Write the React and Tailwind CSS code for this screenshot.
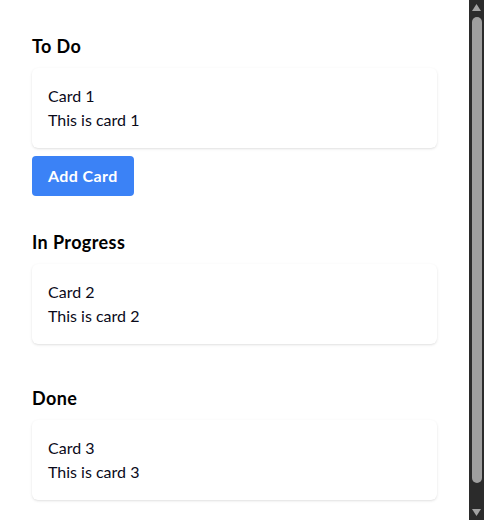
const columns = [
  { title: 'To Do', cards: [{ id: 1, title: 'Card 1', content: 'This is card 1' }], canAdd: true },
  { title: 'In Progress', cards: [{ id: 2, title: 'Card 2', content: 'This is card 2' }] },
  { title: 'Done', cards: [{ id: 3, title: 'Card 3', content: 'This is card 3' }] },
];

function Column({ title, cards, canAdd }) {
  return (
    <div>
      <h2 className="mb-2 text-lg font-bold leading-7 tracking-[0.4px] text-black">{title}</h2>
      {cards.map((card) => (
        <div key={card.id} className="mb-2 rounded-md bg-white p-4 shadow-[0_1px_3px_rgba(0,0,0,0.1),0_1px_2px_-1px_rgba(0,0,0,0.1)]">
          <p className="text-base leading-6 text-[#0a0a1a]">{card.title}</p>
          <p className="text-base leading-6 text-[#0a0a1a]">{card.content}</p>
        </div>
      ))}
      {canAdd && (
        <button className="rounded bg-[#3b82f6] px-4 py-2 text-base font-bold leading-6 tracking-[0.4px] text-white">
          Add Card
        </button>
      )}
    </div>
  );
}

// window scrollbar as drawn in the dark theme
function Scrollbar() {
  return (
    <div className="sticky top-0 flex h-screen w-[15px] shrink-0 flex-col bg-[#2b2b2b]">
      <svg width="15" height="15" viewBox="0 0 15 15" className="shrink-0">
        <polygon points="7.5,4 12,11 3,11" fill="#a3a3a3" />
      </svg>
      <div className="flex-1">
        <div className="ml-[3px] mt-[2px] h-[466px] w-[10px] rounded-full bg-[#9f9f9f]" />
      </div>
      <svg width="15" height="15" viewBox="0 0 15 15" className="shrink-0">
        <polygon points="3,4 12,4 7.5,11" fill="#a3a3a3" />
      </svg>
    </div>
  );
}

export default function App() {
  return (
    <div className="flex bg-white text-black font-['Lato',sans-serif]">
      <main className="flex flex-1 flex-col gap-8 p-8">
        {columns.map((col) => (
          <Column key={col.title} {...col} />
        ))}
      </main>
      <Scrollbar />
    </div>
  );
}
